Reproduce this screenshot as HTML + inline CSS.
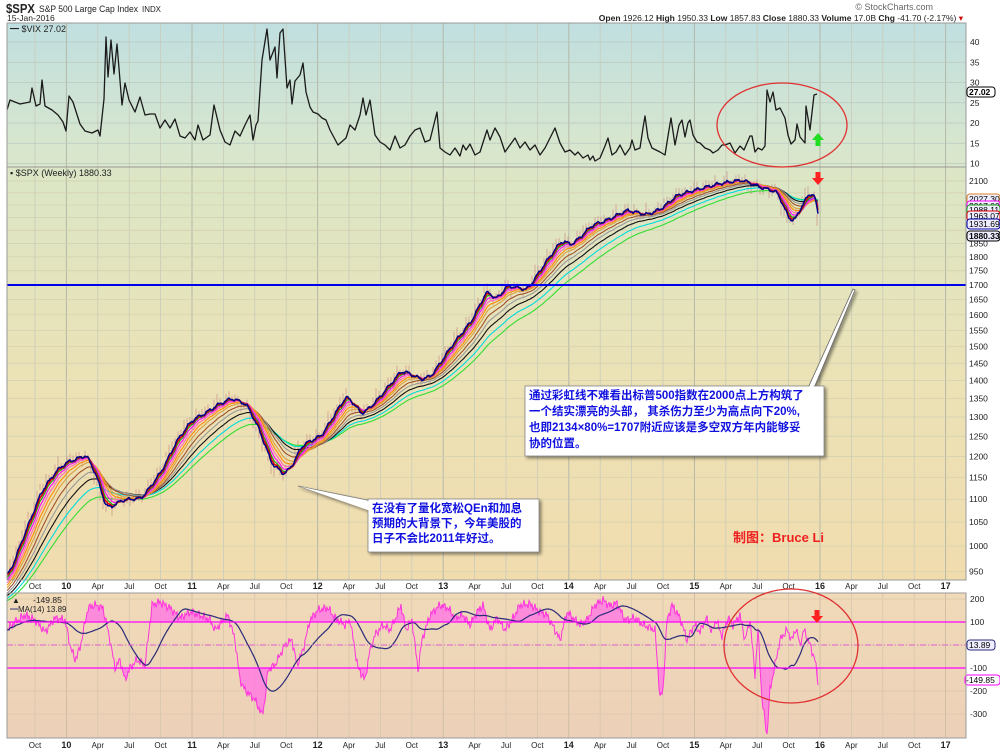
<!DOCTYPE html>
<html><head><meta charset="utf-8">
<style>
html,body{margin:0;padding:0;background:#fff;width:1000px;height:752px;overflow:hidden}
svg{display:block}
text{font-family:"Liberation Sans","Noto Sans CJK SC",sans-serif}
</style></head>
<body>
<svg id="c" width="1000" height="752" viewBox="0 0 1000 752" xmlns="http://www.w3.org/2000/svg">
<defs>
<linearGradient id="gv" x1="0" y1="0" x2="0" y2="1"><stop offset="0" stop-color="#c0dfe0"/><stop offset="1" stop-color="#dbe7cb"/></linearGradient>
<linearGradient id="gs" x1="0" y1="0" x2="0" y2="1"><stop offset="0" stop-color="#dbe6c6"/><stop offset="0.5" stop-color="#ebe2b6"/><stop offset="1" stop-color="#f1dcae"/></linearGradient>
<linearGradient id="gc" x1="0" y1="0" x2="0" y2="1"><stop offset="0" stop-color="#f0dab8"/><stop offset="1" stop-color="#ecd0b8"/></linearGradient>
<clipPath id="cciclip"><rect x="7" y="593" width="959" height="29"/><rect x="7" y="668" width="959" height="70"/></clipPath>
<filter id="sh" x="-10%" y="-10%" width="130%" height="140%"><feDropShadow dx="2" dy="2" stdDeviation="1.5" flood-color="#000" flood-opacity="0.45"/></filter>
</defs>
<rect x="7" y="23" width="959" height="144" fill="url(#gv)"/>
<rect x="7" y="167" width="959" height="413" fill="url(#gs)"/>
<rect x="7" y="593" width="959" height="145" fill="url(#gc)"/>
<g id="grid"></g>
<g id="plots"></g>
<rect x="7" y="23" width="959" height="144" fill="none" stroke="#9a9a9a" stroke-width="1"/>
<rect x="7" y="167" width="959" height="413" fill="none" stroke="#9a9a9a" stroke-width="1"/>
<rect x="7" y="593" width="959" height="145" fill="none" stroke="#9a9a9a" stroke-width="1"/>
<text x="6" y="13" font-size="13" font-weight="bold" fill="#222" textLength="29" lengthAdjust="spacingAndGlyphs">$SPX</text>
<text x="39" y="12" font-size="9.5" fill="#222" textLength="99" lengthAdjust="spacingAndGlyphs">S&amp;P 500 Large Cap Index</text>
<text x="142" y="12" font-size="8" fill="#222" textLength="19" lengthAdjust="spacingAndGlyphs">INDX</text>
<text x="7" y="21" font-size="8.5" fill="#222">15-Jan-2016</text>
<text x="933" y="10" font-size="9" fill="#666" text-anchor="end">© StockCharts.com</text>
<text x="963" y="21" font-size="8.5" fill="#222" text-anchor="end"><tspan font-weight="bold">Open</tspan> 1926.12 <tspan font-weight="bold">High</tspan> 1950.33 <tspan font-weight="bold">Low</tspan> 1857.83 <tspan font-weight="bold">Close</tspan> 1880.33 <tspan font-weight="bold">Volume</tspan> 17.0B <tspan font-weight="bold">Chg</tspan> -41.70 (-2.17%) <tspan fill="#c00">▾</tspan></text>
<text x="10" y="32" font-size="9" fill="#222" font-family="Liberation Mono,monospace">━ $VIX 27.02</text>
<text x="10" y="176" font-size="9" fill="#222" font-family="Liberation Mono,monospace">▪ $SPX (Weekly) 1880.33</text>
<text x="12" y="603" font-size="8" fill="#222">▲</text>
<text x="33" y="603" font-size="8.5" fill="#222">-149.85</text>
<text x="10" y="612" font-size="8" fill="#222"><tspan fill="#2a2a7a">━</tspan>MA(14) 13.89</text>
<g id="ann"></g>
</svg>
<script>
var S=document.getElementById('c'),G=document.getElementById('grid'),P=document.getElementById('plots'),A=document.getElementById('ann');
function el(par,tag,at,txt){var e=document.createElementNS('http://www.w3.org/2000/svg',tag);for(var k in at)e.setAttribute(k,at[k]);if(txt!==undefined)e.textContent=txt;par.appendChild(e);return e;}
var labs=['Oct','10','Apr','Jul','Oct','11','Apr','Jul','Oct','12','Apr','Jul','Oct','13','Apr','Jul','Oct','14','Apr','Jul','Oct','15','Apr','Jul','Oct','16','Apr','Jul','Oct','17'];
for(var i=0;i<labs.length;i++){var x=35+i*31.4;var yr=labs[i].length==2;
 el(G,'line',{x1:x,x2:x,y1:23,y2:580,stroke:yr?'#b4b8a8':'#c8cbbb','stroke-width':yr?1:0.8});
 el(G,'line',{x1:x,x2:x,y1:593,y2:738,stroke:yr?'#c8b8a0':'#d6c6ae','stroke-width':0.8});
 [589,748].forEach(function(yy){el(G,'text',{x:x,y:yy,'font-size':yr?9:8,'font-weight':yr?'bold':'normal','text-anchor':'middle',fill:'#222'},labs[i]);});
}
function vy(v){return 42+(40-v)*4.05;}
[40,35,30,25,20,15,10].forEach(function(v){var y=vy(v);el(G,'line',{x1:7,x2:966,y1:y,y2:y,stroke:'#b9c9c0','stroke-width':0.7});el(G,'text',{x:970,y:y+3,'font-size':8.5,fill:'#222'},v);});
function sy(v){return 285-492*Math.log(v/1700);}
for(var v=950;v<=2100;v+=50){var y=sy(v);el(G,'line',{x1:7,x2:966,y1:y,y2:y,stroke:'#d2cfae','stroke-width':0.7});if(v!=2050&&v!=1900&&v!=1950&&v!=2000)el(G,'text',{x:969,y:y+3,'font-size':8.5,fill:'#222'},v);}
function cy(v){return 645-v*0.23;}
[200,100,0,-100,-200,-300].forEach(function(v){var y=cy(v);el(G,'line',{x1:7,x2:966,y1:y,y2:y,stroke:'#dcc6aa','stroke-width':0.7});if(v!==0)el(G,'text',{x:970,y:y+3,'font-size':8.5,fill:'#222'},v);});
function interp(pts){var out={};for(var i=0;i<pts.length-1;i++){var a=pts[i],b=pts[i+1];for(var x=Math.ceil(a[0]);x<=b[0];x++){out[x]=a[1]+(b[1]-a[1])*(x-a[0])/(b[0]-a[0]||1);}}return out;}
function pathOf(arr){return arr.map(function(p,i){return (i?'L':'M')+p[0].toFixed(1)+' '+p[1].toFixed(1);}).join('');}
var vix=[[7,110],[10,100],[20,104],[30,102],[32,88],[36,106],[40,104],[42,80],[45,106],[52,110],[58,115],[63,122],[66,131],[69,96],[73,102],[80,124],[85,131],[92,133],[98,130],[100,136],[104,99],[106,37],[108,77],[111,40],[114,74],[117,44],[122,105],[125,83],[129,100],[135,112],[140,97],[145,115],[150,114],[155,114],[160,128],[165,120],[170,128],[175,119],[180,136],[185,138],[190,132],[195,140],[198,125],[203,140],[210,135],[214,105],[220,130],[225,142],[230,145],[235,131],[240,136],[245,125],[250,115],[253,140],[256,125],[258,121],[262,60],[267,29],[270,60],[275,47],[277,78],[280,33],[283,29],[287,88],[290,80],[292,104],[295,81],[300,75],[303,63],[306,92],[310,107],[313,112],[318,114],[322,118],[326,120],[330,130],[338,145],[346,138],[350,125],[355,130],[360,115],[363,98],[366,115],[370,100],[375,135],[380,142],[385,145],[390,150],[395,136],[400,148],[405,145],[410,136],[415,130],[420,128],[425,142],[430,140],[437,112],[440,148],[445,152],[450,155],[455,148],[460,156],[463,145],[466,150],[470,144],[475,155],[480,152],[487,130],[490,140],[495,128],[500,137],[505,152],[510,145],[515,138],[520,148],[525,142],[530,150],[535,145],[540,155],[545,148],[553,132],[555,128],[560,143],[565,152],[570,150],[575,155],[578,152],[583,158],[588,155],[590,160],[593,156],[595,161],[600,158],[605,146],[608,138],[612,155],[616,152],[620,145],[625,155],[630,148],[632,140],[635,150],[640,148],[643,128],[645,116],[648,138],[652,148],[660,152],[665,155],[668,136],[671,118],[675,145],[679,125],[682,120],[685,137],[688,123],[690,120],[693,135],[697,142],[700,143],[705,148],[710,150],[713,153],[718,150],[722,145],[725,145],[730,143],[735,153],[740,146],[744,150],[750,136],[752,136],[755,152],[758,148],[762,150],[765,146],[767,90],[770,102],[773,92],[776,110],[780,108],[785,118],[788,135],[791,144],[795,140],[797,124],[800,137],[805,143],[806,106],[810,130],[814,95],[817,94]];
el(P,'path',{d:pathOf(vix),fill:'none',stroke:'#1a1a1a','stroke-width':1.3,'stroke-linejoin':'round'});
var spk=[[7,575],[20,540],[40,490],[55,470],[65,462],[85,455],[95,478],[105,510],[120,500],[140,498],[160,470],[175,440],[190,420],[205,412],[215,405],[230,398],[245,405],[258,432],[270,465],[283,475],[292,462],[300,445],[320,435],[335,410],[345,395],[360,415],[375,400],[390,382],[400,370],[420,380],[430,375],[450,345],[470,320],[485,290],[495,300],[505,285],[525,290],[545,260],[560,240],[570,245],[590,225],[605,220],[625,210],[645,215],[660,208],[675,195],[700,188],[720,183],[740,180],[760,188],[775,192],[781,205],[788,222],[795,218],[802,200],[810,192],[814,196],[818,228]];
var sp=interp(spk),xs=[],ys=[];
for(var x=7;x<=818;x++){var n=Math.sin(x*1.7)*2.2+Math.sin(x*0.63)*2.6+Math.sin(x*3.1)*1.3;ys.push(sp[x]+(x>812?0:n));xs.push(x);}
var bars='';for(var i=0;i<xs.length;i+=3){var h=4+Math.abs(Math.sin(i*0.77))*8;bars+='M'+xs[i]+' '+(ys[i]-h*0.5).toFixed(1)+'v'+h.toFixed(1);}
el(P,'path',{d:bars,stroke:'#c9908a','stroke-width':1,opacity:0.7});
var alphas=[0.02,0.025,0.032,0.04,0.05,0.065,0.08,0.1,0.13,0.17,0.22,0.3];
var cols=['#33dd33','#00dddd','#111','#999','#a0522d','#d8a040','#ff8c00','#ff69b4','#ff00ff','#1a9e1a','#e00000','#00008b'];
for(var k=0;k<alphas.length;k++){var a=alphas[k],e=ys[0]+30*(1-k/12),pts=[];for(var i=0;i<ys.length;i++){e=e+a*(ys[i]-e);pts.push([xs[i],e]);}
 el(P,'path',{d:pathOf(pts),fill:'none',stroke:cols[k],'stroke-width':k==11||k==10?1.5:1.1});}
el(P,'line',{x1:7,x2:966,y1:285,y2:285,stroke:'#0000ee','stroke-width':2});
var rl=[[199,'2027.30','#e08020'],[206,'2017.00','#ff00ff'],[210,'1988.11','#1a9e1a'],[216,'1963.07','#e00000'],[224,'1931.69','#0000aa'],[236,'1880.33','#000']];
rl.forEach(function(r){el(P,'rect',{x:967,y:r[0]-5,width:33,height:10,rx:3,fill:'#eef',stroke:r[2],'stroke-width':1});el(P,'text',{x:969,y:r[0]+3,'font-size':8.5,fill:'#000','font-weight':r[1]=='1880.33'?'bold':'normal'},r[1]);});
el(P,'rect',{x:967,y:87,width:28,height:10,rx:3,fill:'#fff',stroke:'#000','stroke-width':1});
el(P,'text',{x:969,y:95,'font-size':8.5,'font-weight':'bold'},'27.02');
var ck=[[7,630],[15,622],[25,615],[35,620],[45,632],[55,618],[65,620],[70,645],[75,660],[80,648],[88,608],[95,605],[103,608],[110,640],[115,668],[120,660],[125,680],[130,668],[137,660],[145,665],[152,605],[160,602],[170,608],[180,618],[190,612],[200,615],[210,620],[215,630],[222,622],[228,615],[235,640],[240,680],[245,690],[255,700],[262,715],[265,700],[268,670],[275,665],[285,645],[292,640],[297,665],[303,650],[310,620],[318,610],[328,608],[335,618],[345,625],[350,620],[358,668],[365,680],[370,650],[375,635],[383,625],[390,630],[397,615],[401,605],[406,630],[412,620],[418,670],[422,640],[430,615],[440,605],[448,608],[455,618],[463,615],[470,625],[477,612],[483,605],[490,630],[497,618],[505,630],[512,620],[520,605],[530,604],[540,612],[547,615],[555,630],[560,640],[567,612],[573,618],[580,625],[587,620],[595,605],[603,600],[610,606],[617,603],[625,620],[635,618],[643,625],[655,630],[660,698],[663,690],[667,620],[672,605],[680,618],[687,640],[694,625],[700,632],[706,618],[712,632],[716,620],[722,636],[728,618],[733,625],[740,615],[745,640],[750,620],[755,675],[758,630],[762,700],[767,735],[770,690],[775,665],[780,640],[787,630],[792,640],[796,628],[800,645],[804,630],[810,645],[815,660],[818,682]];
var ci=interp(ck),cp=[];for(var x=7;x<=818;x++){cp.push([x,ci[x]+Math.sin(x*2.3)*3+Math.sin(x*1.1)*2]);}
var area=pathOf(cp)+'L818 645L7 645Z';
el(P,'path',{d:area,fill:'#ff7ce0','clip-path':'url(#cciclip)',opacity:0.85});
el(P,'path',{d:pathOf(cp),fill:'none',stroke:'#ff33dd','stroke-width':1});
var ma=[];for(var i=0;i<cp.length;i++){var s=0,n=0;for(var j=Math.max(0,i-34);j<=i;j++){s+=cp[j][1];n++;}ma.push([cp[i][0],s/n]);}
el(P,'path',{d:pathOf(ma),fill:'none',stroke:'#2a2a7a','stroke-width':1.2});
[622,668].forEach(function(y){el(P,'line',{x1:7,x2:966,y1:y,y2:y,stroke:'#ff00ff','stroke-width':1.3});});
el(P,'line',{x1:7,x2:966,y1:645,y2:645,stroke:'#e060d0','stroke-width':1,'stroke-dasharray':'6,2,1,2'});
el(P,'rect',{x:967,y:640,width:28,height:10,rx:3,fill:'#eef',stroke:'#2a2a7a'});el(P,'text',{x:969,y:648,'font-size':8.5},'13.89');
el(P,'rect',{x:965,y:675,width:35,height:10,rx:3,fill:'#fff',stroke:'#ff00ff'});el(P,'text',{x:966,y:683,'font-size':8.5},'-149.85');
el(A,'ellipse',{cx:782,cy:125,rx:65,ry:42,fill:'none',stroke:'#e03030','stroke-width':1.3});
el(A,'ellipse',{cx:791,cy:646,rx:67,ry:57,fill:'none',stroke:'#e03030','stroke-width':1.3});
function arrow(x,y,up,col){var d=up?'M'+x+' '+y+'l-6 7h3.5v6h5v-6h3.5z':'M'+(x-2.5)+' '+y+'h5v6h3.5l-6 7l-6 -7h3.5z';el(A,'path',{d:d,fill:col});}
arrow(818,133,true,'#22dd22');arrow(818,172,false,'#ff2020');arrow(817,610,false,'#ff2020');
el(A,'path',{d:'M808 388L853 289L855 290L814 388Z',fill:'#fff',stroke:'#666','stroke-width':0.8,filter:'url(#sh)'});
el(A,'rect',{x:525,y:386,width:299,height:70,fill:'#fff',stroke:'#888','stroke-width':0.8,filter:'url(#sh)'});
el(A,'path',{d:'M809 387.5L853.5 290.5L813 387.5Z',fill:'#fff'});
var t1=['通过彩虹线不难看出标普500指数在2000点上方构筑了','一个结实漂亮的头部， 其杀伤力至少为高点向下20%,','也即2134×80%=1707附近应该是多空双方年内能够妥','协的位置。'];
t1.forEach(function(s,i){el(A,'text',{x:529,y:399+i*16,'font-size':11.5,'font-weight':'bold',fill:'#1010e0'},s);});
el(A,'path',{d:'M372 501L298 486L372 511Z',fill:'#fff',stroke:'#777','stroke-width':0.8,filter:'url(#sh)'});
el(A,'rect',{x:368,y:499,width:171,height:53,fill:'#fff',stroke:'#888','stroke-width':0.8,filter:'url(#sh)'});
el(A,'path',{d:'M369 501.5L300 486.5L369 510.5Z',fill:'#fff'});
['在没有了量化宽松QEn和加息','预期的大背景下，今年美股的','日子不会比2011年好过。'].forEach(function(s,i){el(A,'text',{x:372,y:512+i*15,'font-size':11.5,'font-weight':'bold',fill:'#1010e0'},s);});
el(A,'text',{x:733,y:542,'font-size':13,'font-weight':'bold',fill:'#ee2020'},'制图：Bruce Li');
</script>
</body></html>
